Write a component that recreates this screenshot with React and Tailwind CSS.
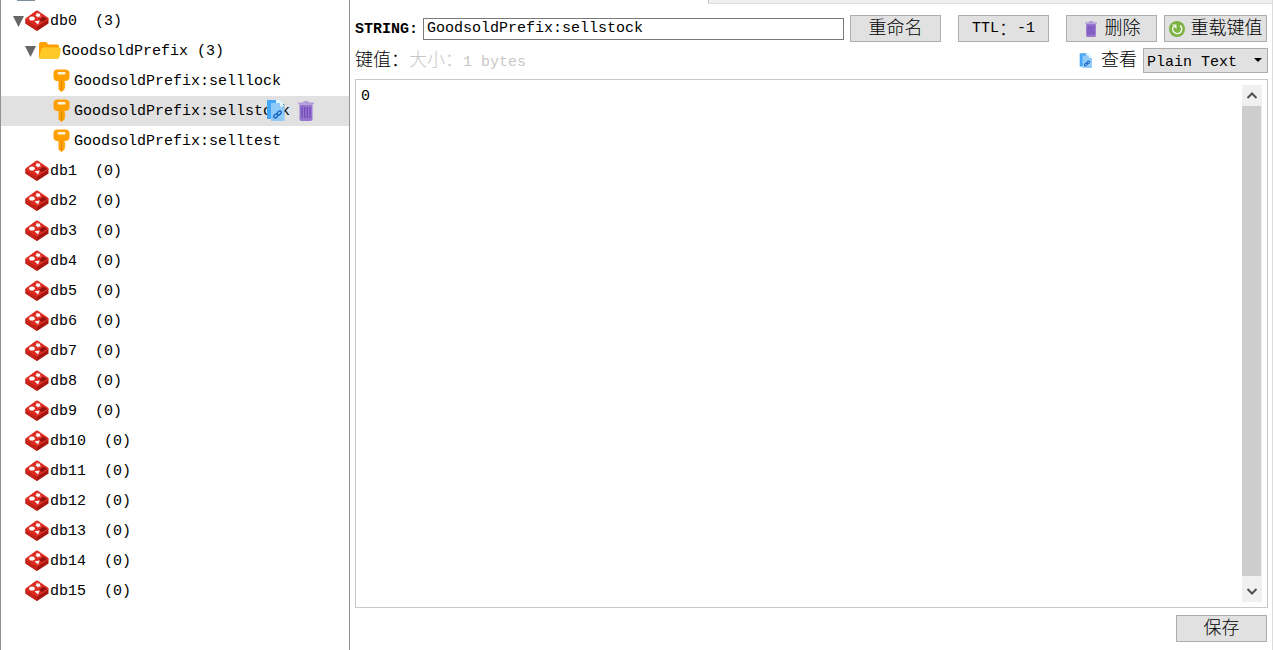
import React, { useState } from 'react';
import clsx from 'clsx';

const EMPTY_DBS = Array.from({ length: 15 }, (_, i) => `db${i + 1}`);

function RedisIcon() {
  return (
    <svg className="w-6 h-6 shrink-0" viewBox="0 0 24 24" aria-hidden="true">
      <path d="M.5 10 12 17l11.500-7v4.500L12 22 .5 14.500z" fill="#a51610" />
      <path d="M.5 10 12 17v5L.5 14.500z" fill="#c42219" />
      <path d="M.5 9.500 11 1.800q1-.6 2 0L23.500 9v1.500L12 17.800.5 11z" fill="#dc2c22" />
      <path d="m14 11 4.500-3.200L22 10l-5 3z" fill="#8f1410" />
      <ellipse cx="7" cy="9.500" rx="2.800" ry="2" fill="#fff" />
      <path d="m12.300 3.300 1 1.500 2.200-.2-.7 1.500 1.200 1.300-2.100 0-1 1.400-.9-1.500-2-.3 1.400-1.100-.5-1.500 1.700.2z" fill="#fff" />
      <path d="m9.500 12.200 5.300-.7-1.800 3.900z" fill="#fff" />
    </svg>
  );
}

function FolderIcon() {
  return (
    <svg className="w-6 h-6 shrink-0" viewBox="0 0 24 24" aria-hidden="true">
      <path d="M2 5q0-2 2-2h5l2.500 2.500H20q2 0 2 2V18q0 1.500-2 1.500H3.500Q2 19.500 2 18z" fill="#ffa000" />
      <path d="M6.500 8.500H22q2 0 1.800 2L22.500 18q-.4 1.800-2.300 1.800H3q-1 0-.8-1L4.300 10q.4-1.500 2.200-1.500z" fill="#ffca28" />
    </svg>
  );
}

function KeyIcon() {
  return (
    <svg className="w-6 h-6 shrink-0" viewBox="0 0 24 24" aria-hidden="true">
      <path
        d="M7.500.5h9.500Q20.500 1 20.500 4v4q0 3.500-3.500 4h-1.500v1.500l1 .8-1 1 1 1-1 1 .8 1-.8 1v1.200L12.500 23 9.500 20.500V12h-2Q4.500 11.500 4.500 8V4Q4.500 1 7.500.5z"
        fill="#ffa000"
      />
      <rect x="8.500" y="3" width="8" height="2.500" rx="1" fill="#fff3dc" />
      <path d="M12 12v9l1 1V12z" fill="#e08a0a" />
    </svg>
  );
}

function TrashIcon({ className }) {
  return (
    <svg className={className} viewBox="0 0 16 20" preserveAspectRatio="none" aria-hidden="true">
      <path d="M1.500 3.500h13V18q0 2-2 2h-9q-2 0-2-2z" fill="#9575cd" />
      <path d="M5 1.500Q5 0 6.500 0h3Q11 0 11 1.500h4q1 0 1 1v1H0v-1q0-1 1-1z" fill="#b39ddb" />
      <path d="M4 6v11M6.700 6v11M9.300 6v11M12 6v11" stroke="#7347b8" strokeWidth="1.200" />
    </svg>
  );
}

function CopyIcon({ className }) {
  return (
    <svg className={className} viewBox="0 0 20 22" aria-hidden="true">
      <path d="M1 0h12v19H1z" fill="#42a5f5" />
      <path d="M5 3h9l4.500 4.500V21H5z" fill="#90caf9" />
      <path d="M10 0h4l5 6.500h-5V3h-4z" fill="#e1f5fe" />
      <g fill="none" stroke="#1565c0" strokeWidth="1.400">
        <rect x="7.500" y="14.500" width="4.500" height="3" rx="1.500" transform="rotate(-40 9.700 16)" />
        <rect x="11" y="11.500" width="4.500" height="3" rx="1.500" transform="rotate(-40 13.200 13)" />
      </g>
    </svg>
  );
}

function ReloadIcon() {
  return (
    <svg className="w-4 h-4 shrink-0" viewBox="0 0 16 16" aria-hidden="true">
      <circle cx="8" cy="8" r="8" fill="#7cb342" />
      <path d="M4.500 5.500A4.500 4.500 0 1 0 11 4.500" fill="none" stroke="#f1f8e9" strokeWidth="1.600" />
      <path d="M3 3.500h4.500V8z" fill="#f1f8e9" />
    </svg>
  );
}

function Chevron({ up }) {
  return (
    <svg className="w-3 h-3" viewBox="0 0 12 12" aria-hidden="true">
      <path d={up ? 'M1.500 8 6 3.500 10.500 8' : 'M1.500 4 6 8.500 10.500 4'} fill="none" stroke="#505050" strokeWidth="2" />
    </svg>
  );
}

// Chinese labels are set larger so that one glyph spans two Latin columns
function Zh({ children }) {
  return <span className="text-lg leading-6 font-light">{children}</span>;
}

function Button({ className, children, ...props }) {
  return (
    <button
      type="button"
      className={clsx(
        'h-[27px] shrink-0 flex items-center justify-center border border-[#adadad] bg-[#e1e1e1] whitespace-nowrap',
        className
      )}
      {...props}
    >
      {children}
    </button>
  );
}

function TreeRow({ icon, label, indent, expanded, selected, onClick }) {
  return (
    <li className={clsx('relative h-[30px]', selected && 'bg-[#e1e1e1]')}>
      <button type="button" onClick={onClick} className={clsx('w-full h-full flex items-center text-left', indent)}>
        <span className="w-3 shrink-0">
          {expanded && (
            <svg className="w-3 h-3" viewBox="0 0 12 12" aria-hidden="true">
              <path d="M0 1h11L5.500 12z" fill="#666" />
            </svg>
          )}
        </span>
        {icon}
        <span className="pl-px pt-[3px] whitespace-pre">{label}</span>
      </button>
      {selected && (
        <div className="absolute right-[35px] inset-y-0 flex items-center gap-3">
          <button type="button" aria-label="复制">
            <CopyIcon className="w-5 h-[22px]" />
          </button>
          <button type="button" aria-label="删除">
            <TrashIcon className="w-4 h-5" />
          </button>
        </div>
      )}
    </li>
  );
}

function KeyTree({ selected, onSelect }) {
  return (
    <aside className="w-[350px] shrink-0 border-x border-[#919191] overflow-hidden">
      <div className="ml-4 w-[18px] h-px bg-[#78909c]" />
      <ul className="pt-[5px]">
        <TreeRow icon={<RedisIcon />} label="db0  (3)" indent="pl-3" expanded />
        <TreeRow icon={<FolderIcon />} label="GoodsoldPrefix (3)" indent="pl-6" expanded />
        {['selllock', 'sellstock', 'selltest'].map((name) => (
          <TreeRow
            key={name}
            icon={<KeyIcon />}
            label={`GoodsoldPrefix:${name}`}
            indent="pl-9"
            selected={selected === name}
            onClick={() => onSelect(name)}
          />
        ))}
        {EMPTY_DBS.map((db) => (
          <TreeRow key={db} icon={<RedisIcon />} label={`${db}  (0)`} indent="pl-3" />
        ))}
      </ul>
    </aside>
  );
}

function ValueEditor() {
  const [value, setValue] = useState('0');
  return (
    <div className="flex-1 min-h-0 mt-1.5 flex border border-[#c8c8c8] p-[5px]">
      <textarea
        aria-label="键值"
        value={value}
        onChange={(e) => setValue(e.target.value)}
        className="flex-1 min-w-0 resize-none outline-none leading-6 overflow-hidden"
      />
      <div className="w-5 flex flex-col bg-[#f0f0f0]">
        <button type="button" aria-label="向上滚动" className="h-[21px] flex items-center justify-center">
          <Chevron up />
        </button>
        <div className="flex-1 mr-px bg-[#cdcdcd]" />
        <button type="button" aria-label="向下滚动" className="h-[26px] pt-1 flex items-center justify-center">
          <Chevron />
        </button>
      </div>
    </div>
  );
}

function KeyPanel() {
  return (
    <main className="flex-1 min-w-0 flex flex-col border-r border-[#dcdcdc]">
      <div className="h-1 shrink-0 ml-[358px] border-l border-b border-l-[#c8c8c8] border-b-[#dcdcdc] bg-[#f0f0f0]" />
      <div className="flex-1 min-h-0 flex flex-col pl-[5px] pr-1 pt-[11px] pb-2">
        <div className="flex items-center pr-px">
          <label htmlFor="key-name" className="font-bold mr-[5px] pt-[3px]">STRING:</label>
          <input
            id="key-name"
            defaultValue="GoodsoldPrefix:sellstock"
            className="flex-1 min-w-0 h-[22px] px-[3px] pt-0.5 border border-[#7a7a7a] outline-none"
          />
          <Button className="w-[91px] ml-1.5"><Zh>重命名</Zh></Button>
          <Button className="w-[91px] ml-[17px] pt-0.5">TTL<Zh>：</Zh>-1</Button>
          <Button className="w-[91px] ml-[17px] pl-0.5 gap-2">
            <TrashIcon className="w-3 h-4" />
            <Zh>删除</Zh>
          </Button>
          <Button className="w-[103px] ml-[7px] gap-1.5">
            <ReloadIcon />
            <Zh>重载键值</Zh>
          </Button>
        </div>

        <div className="mt-1.5 h-[25px] flex items-center">
          <span className="pt-0.5"><Zh>键值：</Zh></span>
          <span className="pt-0.5 text-[#c8c8c8]"><Zh>大小：</Zh>1 bytes</span>
          <CopyIcon className="ml-auto mr-2 w-[14px] h-4" />
          <label htmlFor="view-as" className="mr-1.5 pt-0.5"><Zh>查看</Zh></label>
          <div className="relative">
            <select
              id="view-as"
              className="block appearance-none w-[125px] h-[25px] pl-[3px] pt-[3px] border border-[#adadad] bg-[#e1e1e1] outline-none"
            >
              <option>Plain Text</option>
              <option>JSON</option>
              <option>HEX</option>
            </select>
            <svg className="absolute right-1.5 top-2.5 w-2 h-1 pointer-events-none" viewBox="0 0 8 4" aria-hidden="true">
              <path d="M0 0h8L4 4z" fill="#000" />
            </svg>
          </div>
        </div>

        <ValueEditor />

        <Button className="self-end w-[91px] mt-[7px] mr-px"><Zh>保存</Zh></Button>
      </div>
    </main>
  );
}

export default function App() {
  const [selected, setSelected] = useState('sellstock');
  return (
    <div className="h-screen flex overflow-hidden bg-white text-black text-[15px] font-['Liberation_Mono','Noto_Sans_CJK_SC',monospace]">
      <KeyTree selected={selected} onSelect={setSelected} />
      <KeyPanel />
    </div>
  );
}
